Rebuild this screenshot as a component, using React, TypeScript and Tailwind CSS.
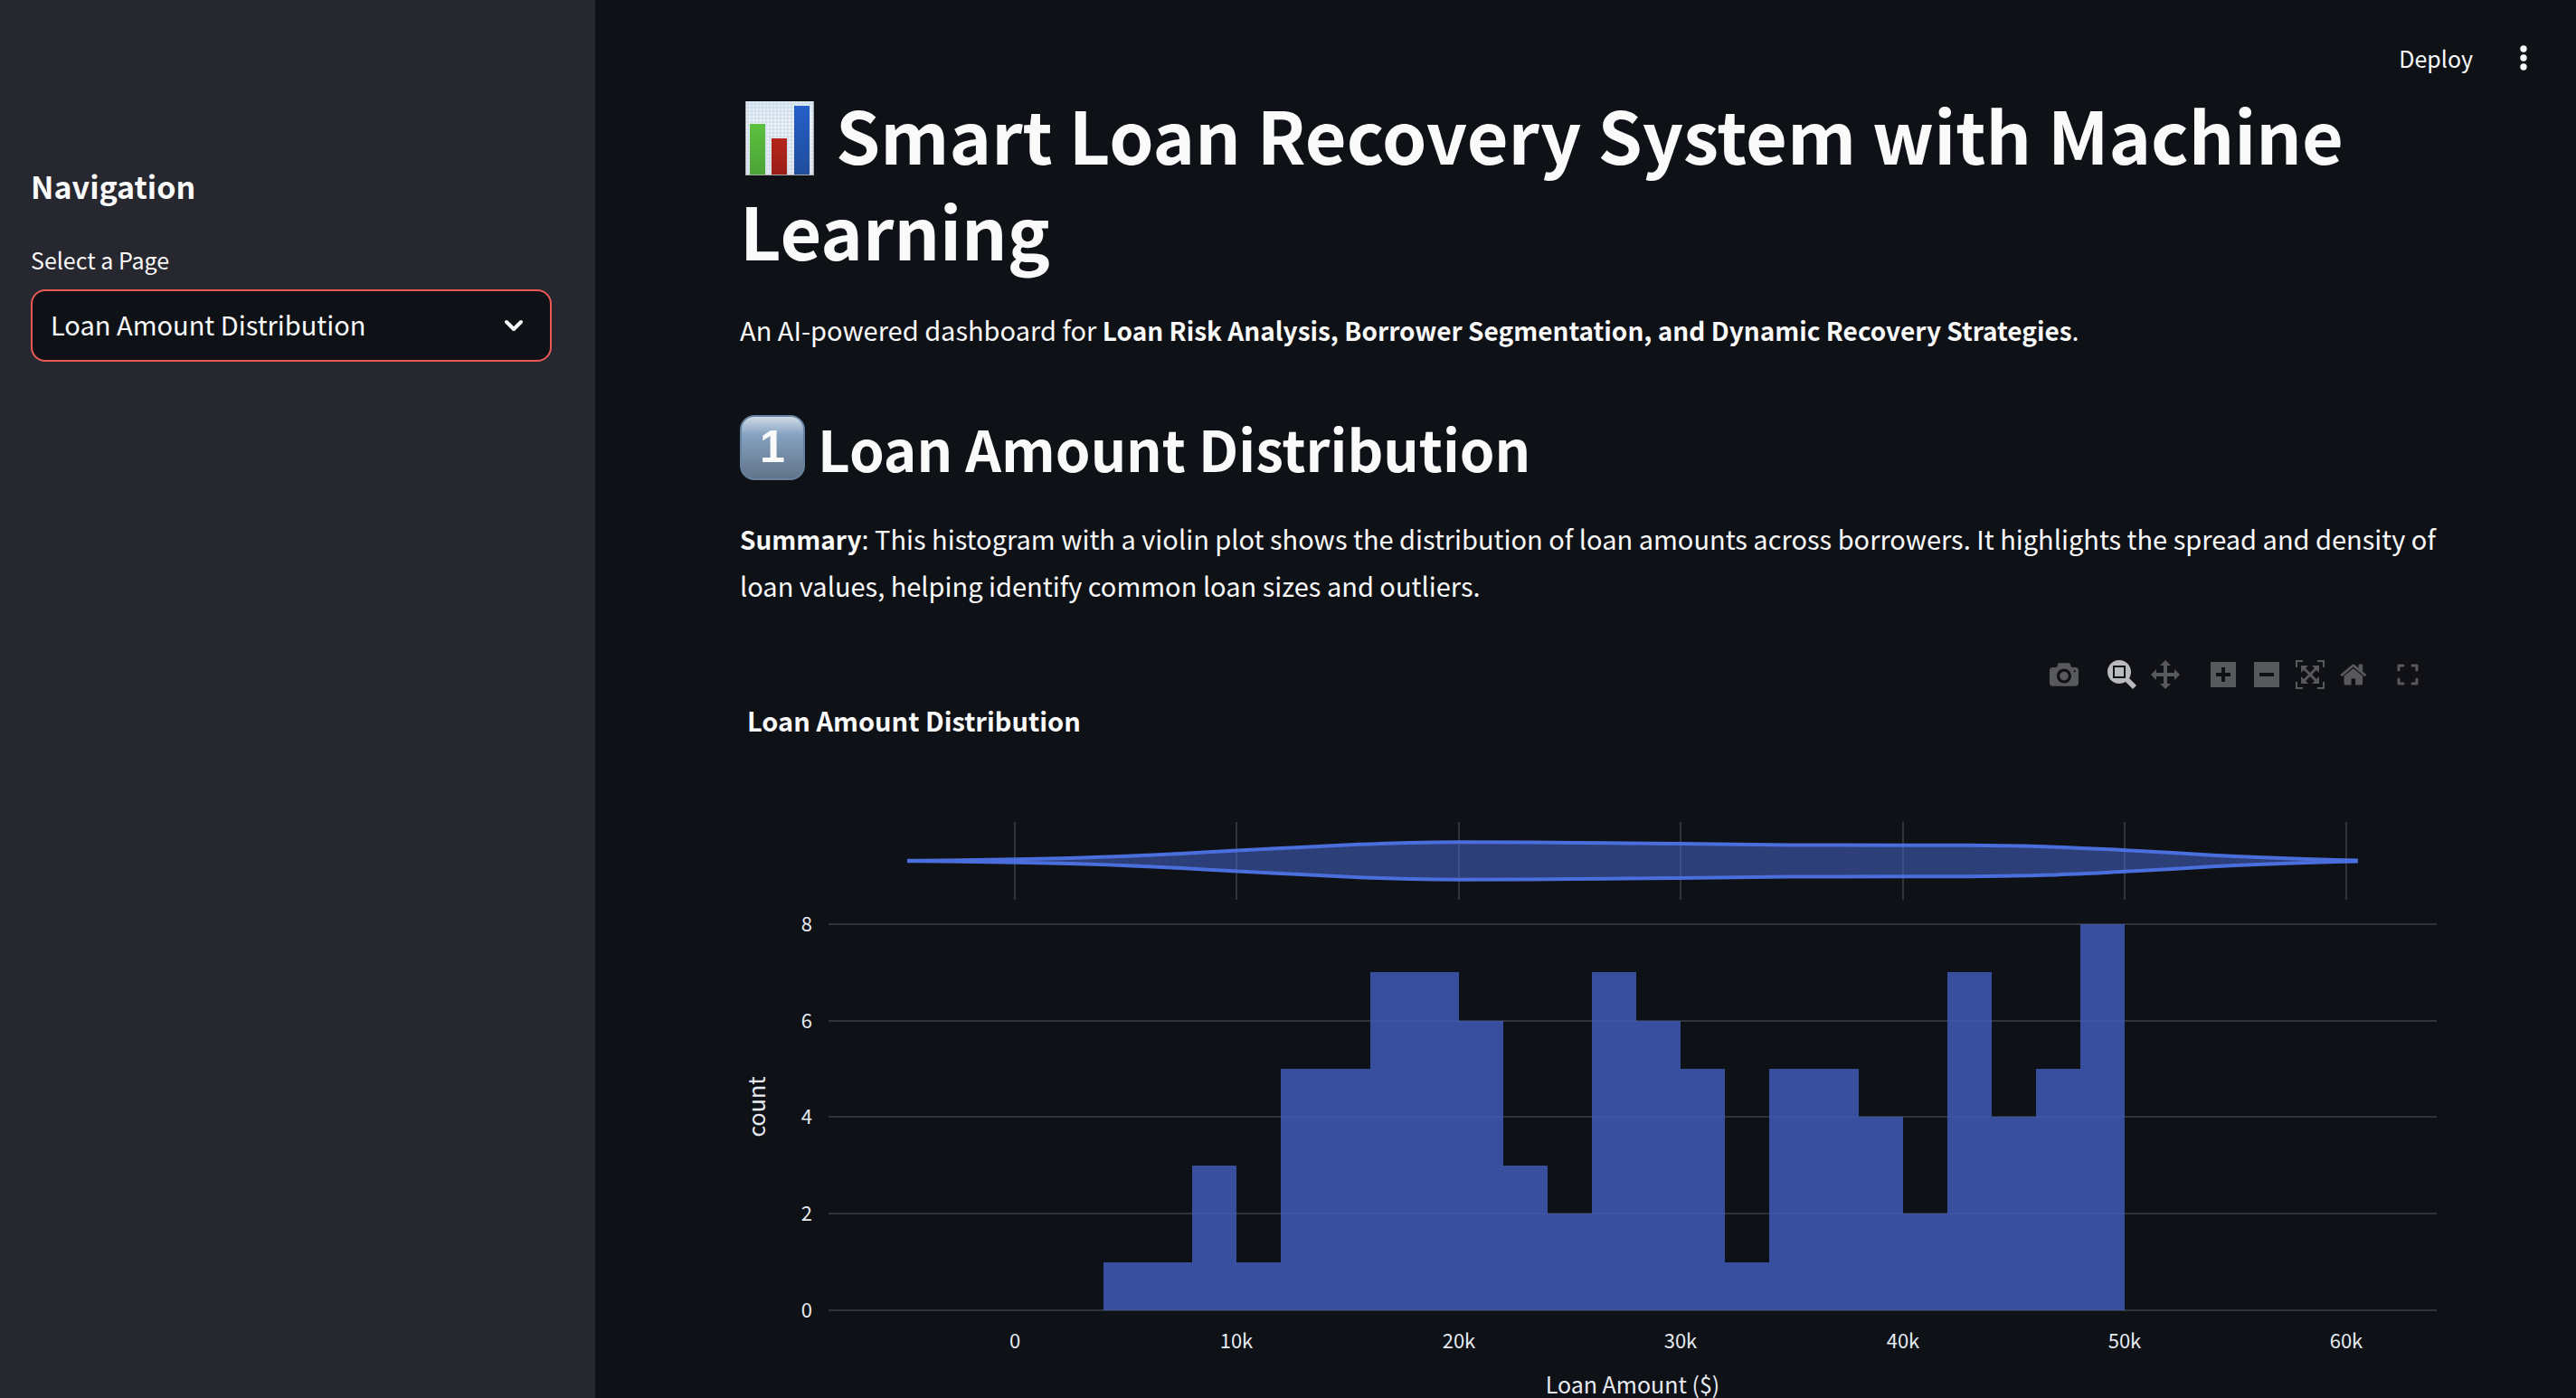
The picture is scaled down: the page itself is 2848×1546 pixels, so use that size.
import React from "react";

const GRID = "#31333c";
const INK = "#e6eaf1";

const MODEBAR = {
  camera:
    "m500 450c-83 0-150-67-150-150 0-83 67-150 150-150 83 0 150 67 150 150 0 83-67 150-150 150z m400 150h-120c-16 0-34 13-39 29l-31 93c-6 15-23 28-40 28h-340c-16 0-34-13-39-28l-31-94c-6-15-23-28-40-28h-120c-55 0-100-45-100-100v-450c0-55 45-100 100-100h800c55 0 100 45 100 100v450c0 55-45 100-100 100z m-400-550c-138 0-250 112-250 250 0 138 112 250 250 250 138 0 250-112 250-250 0-138-112-250-250-250z m365 380c-19 0-35 16-35 35 0 19 16 35 35 35 19 0 35-16 35-35 0-19-16-35-35-35z",
  zoom: "m1000-25l-250 251c40 63 63 138 63 218 0 224-182 406-407 406-224 0-406-182-406-406s183-406 407-406c80 0 155 22 218 62l250-250 125 125z m-812 250l0 438 437 0 0-438-437 0z m62 375l313 0 0-312-313 0 0 312z",
  pan: "m1000 350l-187 188 0-125-250 0 0 250 125 0-188 187-187-187 125 0 0-250-250 0 0 125-188-188 186-187 0 125 252 0 0-250-125 0 187-188 188 188-125 0 0 250 250 0 0-126 187 188z",
  plus: "m1 787l0-875 875 0 0 875-875 0z m687-500l-187 0 0-187-125 0 0 187-188 0 0 125 188 0 0 187 125 0 0-187 187 0 0-125z",
  minus: "m0 788l0-876 875 0 0 876-875 0z m688-500l-500 0 0 125 500 0 0-125z",
  autoscale:
    "m250 850l-187 0-63 0 0-62 0-188 63 0 0 188 187 0 0 62z m688 0l-188 0 0-62 188 0 0-188 62 0 0 188 0 62-62 0z m-875-938l0 188-63 0 0-188 0-62 63 0 187 0 0 62-187 0z m875 188l0-188-188 0 0-62 188 0 62 0 0 62 0 188-62 0z m-125 188l-1 0-93-94-156 156 156 156 92-93 2 0 0 250-250 0 0-2 93-92-156-156-156 156 94 92 0 2-250 0 0-250 0 0 93 93 157-156-157-156-93 94 0 0 0-250 250 0 0 0-94 93 156 157 156-157-93-93 0 0 250 0 0 250z",
  home: "m786 296v-267q0-15-11-26t-25-10h-214v214h-143v-214h-214q-15 0-25 10t-11 26v267q0 1 0 2t0 2l321 264 321-264q1-1 1-4z m124 39l-34-41q-5-5-12-6h-2q-7 0-12 3l-386 322-386-322q-7-4-13-4-7 2-12 7l-35 41q-4 5-3 12t6 12l401 334q18 15 42 15t43-15l136-114v109q0 8 5 13t13 5h107q8 0 13-5t5-13v-227l122-102q5-5 6-12t-4-13z",
};

function ToolButton({ label, d, width = 1000, active = false }: { label: string; d: string; width?: number; active?: boolean }) {
  return (
    <button type="button" aria-label={label} className="flex h-8 w-12 items-center justify-center">
      <svg viewBox={`0 0 ${width} 1000`} className={active ? "h-8 fill-[#b9babd]" : "h-8 fill-[#58595d]"}>
        <path d={d} transform="matrix(1 0 0 -1 0 850)" />
      </svg>
    </button>
  );
}

function ModeBar() {
  return (
    <div className="mt-1 mr-1 flex h-[52px] items-end justify-end self-end bg-[#101116] pb-px pr-1 pl-4" role="toolbar" aria-label="Chart tools">
      <ToolButton label="Download plot as a png" d={MODEBAR.camera} />
      <div className="ml-4 flex">
        <ToolButton label="Zoom" d={MODEBAR.zoom} active />
        <ToolButton label="Pan" d={MODEBAR.pan} />
      </div>
      <div className="ml-4 flex">
        <ToolButton label="Zoom in" d={MODEBAR.plus} width={875} />
        <ToolButton label="Zoom out" d={MODEBAR.minus} width={875} />
        <ToolButton label="Autoscale" d={MODEBAR.autoscale} />
        <ToolButton label="Reset axes" d={MODEBAR.home} width={928.6} />
      </div>
      <button type="button" aria-label="Fullscreen" className="ml-3 flex h-8 w-12 items-center justify-center">
        <svg viewBox="0 0 24 24" className="size-6 fill-none stroke-[#58595d]" strokeWidth="3" strokeLinecap="round" strokeLinejoin="round">
          <path d="M2 7V2H7M17 2H22V7M22 17V22H17M7 22H2V17" />
        </svg>
      </button>
    </div>
  );
}

const COUNTS = [1, 1, 3, 1, 5, 5, 7, 7, 6, 3, 2, 7, 6, 5, 1, 5, 5, 4, 2, 7, 4, 5, 8];

// Violin outline: [x, half height]
const DENSITY: [number, number][] = [
  [187, 0.3], [245, 0.7], [304, 1.8], [364, 3], [428, 5.2], [492, 8.2], [550, 11.5], [620, 15],
  [684, 18.2], [740, 20], [795, 20.7], [875, 20.4], [980, 19.5], [1040, 18.9], [1160, 17.6],
  [1285, 17.3], [1360, 17.2], [1443, 15.8], [1531, 11.8], [1583, 9], [1654, 5], [1724, 2.3],
  [1765, 1.1], [1787, 0.5],
];
const MID = 87;

function smooth(points: [number, number][]) {
  let d = "";
  for (let i = 0; i < points.length - 1; i++) {
    const p0 = points[Math.max(i - 1, 0)];
    const p1 = points[i];
    const p2 = points[i + 1];
    const p3 = points[Math.min(i + 2, points.length - 1)];
    d += `C${p1[0] + (p2[0] - p0[0]) / 6} ${p1[1] + (p2[1] - p0[1]) / 6} ${p2[0] - (p3[0] - p1[0]) / 6} ${p2[1] - (p3[1] - p1[1]) / 6} ${p2[0]} ${p2[1]}`;
  }
  return d;
}

const upper = DENSITY.map(([x, h]): [number, number] => [x, MID - h]);
const lower = DENSITY.map(([x, h]): [number, number] => [x, MID + h]).reverse();
const VIOLIN = `M${upper[0][0]} ${upper[0][1]}${smooth(upper)}L${lower[0][0]} ${lower[0][1]}${smooth(lower)}Z`;

const px = (k: number) => Math.round(304 + 24.54 * k);
const py = (n: number) => Math.round(584 - 53.4 * n);

function Chart() {
  return (
    <svg viewBox="0 0 1876 704" className="block w-full" role="img" aria-label="Histogram and violin plot of loan amounts" fontSize="22" fill={INK}>
      {[0, 10, 20, 30, 40, 50, 60].map((k) => (
        <rect key={k} x={px(k) - 1} y="44" width="2" height="86" fill={GRID} />
      ))}
      {[0, 2, 4, 6, 8].map((n) => (
        <rect key={n} x="98" y={py(n) - 1} width="1778" height="2" fill={GRID} />
      ))}
      <path d={VIOLIN} fill="#4a6edb" fillOpacity="0.5" stroke="#4a6edb" strokeWidth="4" />
      <g fill="#3e5ab4" fillOpacity="0.86" shapeRendering="crispEdges">
        {COUNTS.map((n, i) => (
          <rect key={i} x={px(4 + i * 2)} y={py(n)} width={px(6 + i * 2) - px(4 + i * 2)} height={584 - py(n)} />
        ))}
      </g>
      {[0, 2, 4, 6, 8].map((n) => (
        <text key={n} x="80" y={py(n) + 8} textAnchor="end">{n}</text>
      ))}
      {[0, 10, 20, 30, 40, 50, 60].map((k) => (
        <text key={k} x={px(k)} y="626" textAnchor="middle">{k === 0 ? "0" : `${k}k`}</text>
      ))}
      <text x="987" y="676" textAnchor="middle" fontSize="25">Loan Amount ($)</text>
      <text transform="translate(28 359) rotate(-90)" textAnchor="middle" fontSize="25">count</text>
    </svg>
  );
}

function BarChartEmoji() {
  return (
    <svg viewBox="0 0 76 82" className="mr-6 ml-[6px] inline-block h-[82px] w-[76px] align-[-12px]" aria-hidden="true">
      <defs>
        <linearGradient id="paper" x1="0" y1="0" x2="0" y2="1">
          <stop offset="0" stopColor="#e4e9f0" />
          <stop offset="0.3" stopColor="#f5f5f5" />
          <stop offset="1" stopColor="#e9e7e8" />
        </linearGradient>
        <linearGradient id="green" x1="0" y1="0" x2="0" y2="1">
          <stop offset="0" stopColor="#5cc13f" />
          <stop offset="1" stopColor="#4ba336" />
        </linearGradient>
        <linearGradient id="red" x1="0" y1="0" x2="0" y2="1">
          <stop offset="0" stopColor="#b5251a" />
          <stop offset="1" stopColor="#991f18" />
        </linearGradient>
        <linearGradient id="blue" x1="0" y1="0" x2="0" y2="1">
          <stop offset="0" stopColor="#255fc9" />
          <stop offset="1" stopColor="#204d9c" />
        </linearGradient>
        <pattern id="grid" width="4" height="4" patternUnits="userSpaceOnUse">
          <path d="M3 0V4M0 3H4" stroke="#c3daee" strokeWidth="1" />
        </pattern>
      </defs>
      <rect width="76" height="82" fill="url(#paper)" />
      <rect width="76" height="82" fill="url(#grid)" />
      <path d="M0.5 0V81.5H75.5V0" fill="none" stroke="#a9a9ab" />
      <rect x="5" y="25" width="17" height="56" fill="url(#green)" />
      <rect x="29" y="41" width="17" height="40" fill="url(#red)" />
      <rect x="54" y="5" width="17" height="76" fill="url(#blue)" />
    </svg>
  );
}

export default function App() {
  return (
    <div className="flex h-screen overflow-hidden bg-[#0e1116] font-['Noto_Sans_CJK_SC','Noto_Sans',sans-serif] text-[#fafafa]">
      <aside className="w-[658px] shrink-0 bg-[#272730] pt-[182px] pr-12 pl-[34px]">
        <h2 className="text-[34px] leading-[48px] font-bold">Navigation</h2>
        <label htmlFor="page" className="mt-9 block text-[25px] leading-[42px]">Select a Page</label>
        <div className="relative mt-3">
          <select id="page" className="h-20 w-full appearance-none rounded-2xl border-2 border-[#ed5a55] bg-[#0e1116] pr-16 pb-0.5 pl-5 text-[29px] outline-none">
            <option>Loan Amount Distribution</option>
          </select>
          <svg viewBox="0 0 24 16" className="pointer-events-none absolute top-8 right-[30px] h-4 w-6 fill-none stroke-[#fafafa]" strokeWidth="4" strokeLinecap="round" strokeLinejoin="round">
            <path d="M4 4L12 12L20 4" />
          </svg>
        </div>
      </aside>

      <div className="min-w-0 flex-1">
        <header className="flex h-[95px] items-center justify-end gap-[38px] pt-8 pr-10">
          <button type="button" className="text-[25px] leading-[42px]">Deploy</button>
          <button type="button" aria-label="Main menu" className="flex w-9 justify-center">
            <svg viewBox="0 0 8 28" className="h-7 w-2 fill-[#fafafa]">
              <circle cx="4" cy="4" r="3.7" />
              <circle cx="4" cy="14" r="3.7" />
              <circle cx="4" cy="24" r="3.7" />
            </svg>
          </button>
        </header>

        <main className="flex flex-col pr-[154px] pl-40">
          <h1 className="text-[79px] leading-[106px] font-bold">
            <BarChartEmoji />
            Smart Loan Recovery System with Machine Learning
          </h1>
          <p className="mt-8 text-[29px] leading-[51px]">
            An AI-powered dashboard for <strong className="text-[28px]">Loan Risk Analysis, Borrower Segmentation, and Dynamic Recovery Strategies</strong>.
          </p>

          <h2 className="mt-[61px] flex items-center gap-[14px] text-[62px] leading-[86px] font-bold">
            <span className="flex size-[72px] justify-center rounded-2xl border-2 border-[#64819f] bg-linear-to-b from-[#cfdbe5] via-[#84a1c0] via-30% to-[#62748a] font-['Liberation_Sans',sans-serif] text-[50px] leading-[66px]">
              1
            </span>
            Loan Amount Distribution
          </h2>
          <p className="mt-8 -mr-4 text-[29px] leading-[51px]">
            <strong className="text-[28px]">Summary</strong>: This histogram with a violin plot shows the distribution of loan amounts across borrowers. It highlights the spread and density of loan values, helping identify common loan sizes and outliers.
          </p>

          <figure className="mt-[34px] flex flex-col">
            <ModeBar />
            <figcaption className="mt-2 ml-2 text-[29px] leading-[51px] font-bold">Loan Amount Distribution</figcaption>
            <div className="mt-[43px]">
              <Chart />
            </div>
          </figure>
        </main>
      </div>
    </div>
  );
}
